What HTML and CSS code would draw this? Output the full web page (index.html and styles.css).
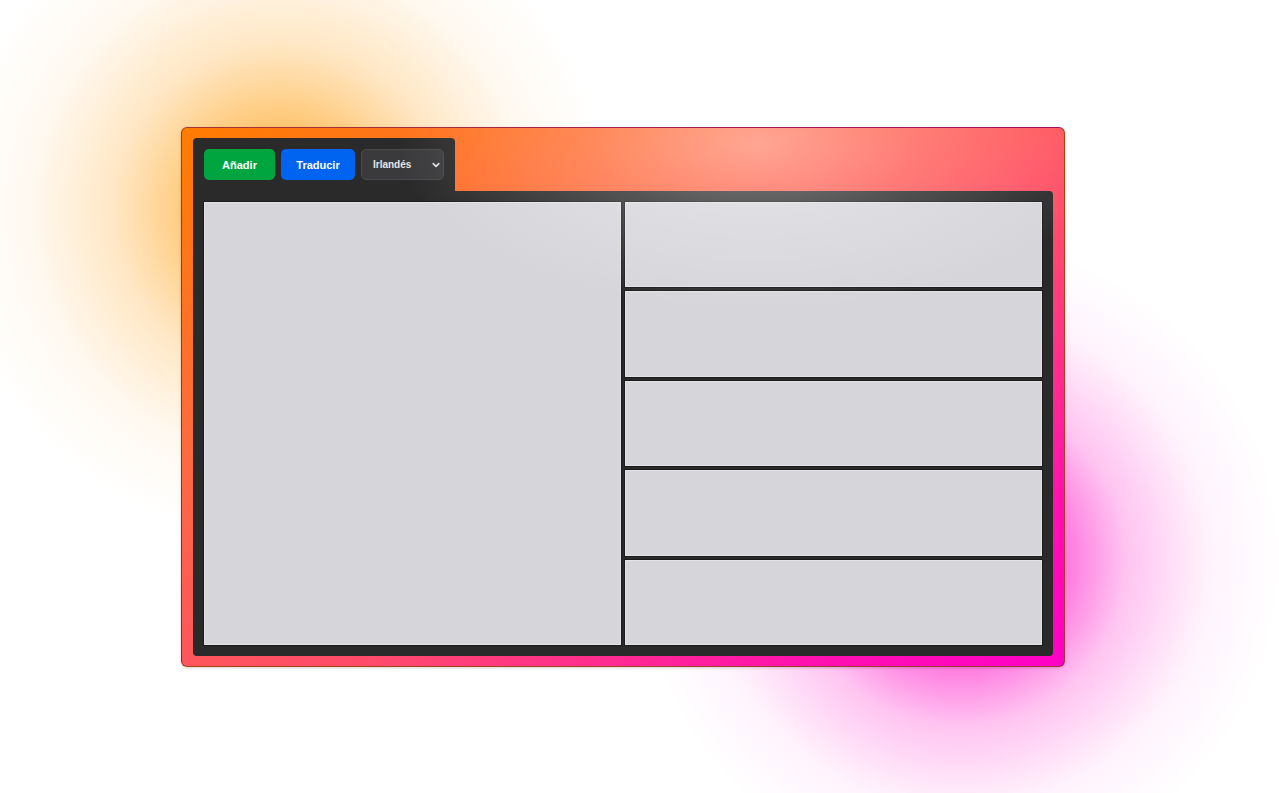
FILE: index.html
```html
<!DOCTYPE html>
<html lang="es">
<head>
<meta charset="utf-8">
<title>Traductor</title>
<link rel="stylesheet" href="styles.css">
</head>
<body>
<div class="stage">
  <div class="blob blob-orange"></div>
  <div class="blob blob-magenta"></div>
  <div class="window">
    <div class="glow"></div>
    <div class="toolbar">
      <button class="btn btn-add">Añadir</button>
      <button class="btn btn-translate">Traducir</button>
      <div class="select">
        <span>Irlandés</span>
        <svg width="8" height="6" viewBox="0 0 8 6"><path d="M1.2 1.6 L4 4.4 L6.8 1.6" fill="none" stroke="#e8e8e8" stroke-width="1.5" stroke-linecap="round" stroke-linejoin="round"/></svg>
      </div>
    </div>
    <div class="main">
      <div class="panel panel-big"></div>
      <div class="stack">
        <div class="panel"></div>
        <div class="panel"></div>
        <div class="panel"></div>
        <div class="panel"></div>
        <div class="panel"></div>
      </div>
    </div>
  </div>
</div>
</body>
</html>
```

FILE: styles.css
```css
* { box-sizing: border-box; }
html, body {
  margin: 0;
  padding: 0;
  width: 100%;
  height: 100%;
  background: #ffffff;
  overflow: hidden;
  font-family: "Liberation Sans", Arial, sans-serif;
}
.stage {
  position: relative;
  width: 1279px;
  height: 793px;
  padding: 127px 0 0 181px;
  overflow: hidden;
}
.blob {
  position: absolute;
  pointer-events: none;
}
.blob-orange {
  left: -50px;
  top: -120px;
  width: 660px;
  height: 660px;
  background: radial-gradient(circle closest-side at 50% 50%, rgba(255,150,0,0.8) 0%, rgba(255,160,20,0.6) 25%, rgba(255,175,60,0.3) 50%, rgba(255,190,100,0.1) 75%, rgba(255,200,120,0) 100%);
}
.blob-magenta {
  left: 640px;
  top: 240px;
  width: 640px;
  height: 640px;
  background: radial-gradient(circle closest-side at 50% 50%, rgba(255,0,200,0.9) 0%, rgba(255,20,200,0.65) 28%, rgba(255,60,210,0.3) 52%, rgba(255,110,225,0.08) 78%, rgba(255,140,230,0) 100%);
}
.window {
  position: relative;
  width: 884px;
  height: 540px;
  padding: 10px 11px;
  border: 1px solid rgba(90, 30, 20, 0.55);
  border-radius: 6px;
  background: linear-gradient(148deg, #ff7c00 0%, #ff6a3e 30%, #ff4a6c 60%, #ff10b0 85%, #ff00c8 100%);
  box-shadow: 0 1px 3px rgba(0,0,0,0.18);
  display: flex;
  flex-direction: column;
}
.glow {
  position: absolute;
  inset: 0;
  border-radius: 6px;
  pointer-events: none;
  z-index: 2;
  background: radial-gradient(ellipse 360px 170px at 575px 15px, rgba(255,255,255,0.42) 0%, rgba(255,255,255,0.2) 45%, rgba(255,255,255,0) 100%);
}
.toolbar {
  align-self: flex-start;
  display: flex;
  gap: 6px;
  padding: 11px;
  background: #2a2a2a;
  border-radius: 4px 4px 0 0;
}
.btn {
  height: 31px;
  border: none;
  border-radius: 5px;
  color: #ffffff;
  font-family: "Liberation Sans", Arial, sans-serif;
  font-weight: 700;
  font-size: 11px;
  padding: 0;
}
.btn-add {
  width: 71px;
  background: #00a540;
}
.btn-translate {
  width: 74px;
  background: #0064f0;
}
.select {
  width: 83px;
  height: 31px;
  display: flex;
  align-items: center;
  justify-content: space-between;
  padding: 0 3px 0 11px;
  background: #3a3a3c;
  border: 1px solid #4a4a4c;
  border-radius: 5px;
  color: #e6e6e6;
  font-size: 10px;
  font-weight: 700;
}
.select svg { display: block; }
.main {
  flex: 1;
  display: grid;
  grid-template-columns: 1fr 1fr;
  gap: 4px;
  padding: 11px;
  background: #2a2a2a;
  border-radius: 0 4px 4px 4px;
}
.stack {
  display: grid;
  grid-template-rows: repeat(5, 1fr);
  gap: 4px;
}
.panel {
  background: #d6d5da;
  border: 1px solid #e3e3e7;
  box-shadow: 0 0 0 1px #1a1a1a;
}
```
